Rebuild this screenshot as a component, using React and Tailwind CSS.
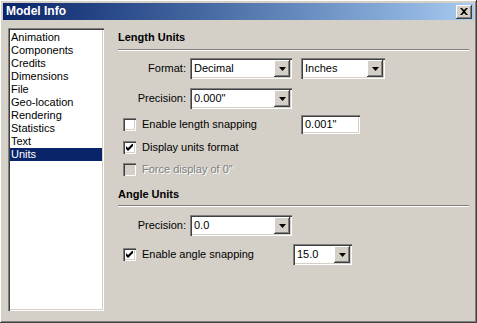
const raised =
  "shadow-[inset_-1px_-1px_#404040,inset_1px_1px_#ffffff,inset_-2px_-2px_#808080,inset_2px_2px_#d4d0c8]";
const sunken =
  "shadow-[inset_1px_1px_#808080,inset_2px_2px_#404040,inset_-1px_-1px_#ffffff,inset_-2px_-2px_#d4d0c8]";

const items = [
  "Animation",
  "Components",
  "Credits",
  "Dimensions",
  "File",
  "Geo-location",
  "Rendering",
  "Statistics",
  "Text",
  "Units",
];

function Arrow() {
  return (
    <svg width="7" height="4" viewBox="0 0 7 4">
      <path d="M0 0h7L3.5 4z" fill="#000" />
    </svg>
  );
}

function Combo({ value, width }) {
  return (
    <div className={`flex h-[21px] bg-white p-[2px] ${sunken} ${width}`}>
      <div className="flex-1 pl-[2px] leading-[17px] text-black">{value}</div>
      <div className={`flex h-[17px] w-[16px] items-center justify-center bg-[#d4d0c8] ${raised}`}>
        <Arrow />
      </div>
    </div>
  );
}

function Check({ checked, disabled }) {
  return (
    <div
      className={`flex h-[13px] w-[13px] shrink-0 items-center justify-center ${sunken} ${
        disabled ? "bg-[#d4d0c8]" : "bg-white"
      }`}
    >
      {checked && (
        <svg width="7" height="7" viewBox="0 0 7 7">
          <path d="M0 2v3l2 2 5-5V-1L2 4z" fill="#000" />
        </svg>
      )}
    </div>
  );
}

function Header({ title }) {
  return <div className="font-bold leading-[13px] text-black">{title}</div>;
}

function Rule({ className }) {
  return <div className={`h-[2px] border-t border-[#808080] border-b border-b-white ${className}`} />;
}

export default function App() {
  return (
    <div
      className={`flex h-[323px] w-[477px] flex-col bg-[#d4d0c8] p-[3px] font-['Liberation_Sans',Arial,sans-serif] text-[11px] leading-[13px] ${raised}`}
    >
      {/* title bar */}
      <div className="flex h-[18px] items-center justify-between bg-gradient-to-r from-[#0a246a] to-[#a6caf0] pl-[3px] pr-[2px]">
        <span className="text-[12px] font-bold text-white">Model Info</span>
        <div className={`flex h-[14px] w-[16px] items-center justify-center bg-[#d4d0c8] ${raised}`}>
          <svg width="8" height="7" viewBox="0 0 8 7">
            <path d="M0 0h2l2 2 2-2h2L5 3.5 8 7H6L4 5 2 7H0l3-3.5z" fill="#000" />
          </svg>
        </div>
      </div>

      <div className="flex flex-1 pl-[5px] pt-[8px] pb-[9px]">
        {/* list */}
        <div className={`h-[283px] w-[96px] bg-white p-[2px] pt-[3px] ${sunken}`}>
          {items.map((it) => (
            <div
              key={it}
              className={`h-[13px] pl-[1px] leading-[13px] ${
                it === "Units" ? "bg-[#0a246a] text-white" : "text-black"
              }`}
            >
              {it}
            </div>
          ))}
        </div>

        {/* settings */}
        <div className="ml-[14px] w-[351px] pt-[3px]">
          <Header title="Length Units" />
          <Rule className="mt-[5px]" />

          <div className="mt-[7px] flex items-center">
            <div className="w-[68px] text-right text-black">Format:</div>
            <Combo value="Decimal" width="ml-[4px] w-[102px]" />
            <Combo value="Inches" width="ml-[9px] w-[84px]" />
          </div>

          <div className="mt-[9px] flex items-center">
            <div className="w-[68px] text-right text-black">Precision:</div>
            <Combo value={'0.000"'} width="ml-[4px] w-[102px]" />
          </div>

          <div className="mt-[6px] flex h-[19px] items-center pl-[5px]">
            <div className="flex w-[178px] items-center gap-[6px]">
              <Check />
              <span className="text-black">Enable length snapping</span>
            </div>
            <div className={`h-[19px] w-[59px] bg-white pl-[4px] leading-[19px] text-black ${sunken}`}>
              0.001"
            </div>
          </div>

          <div className="mt-[7px] flex items-center gap-[6px] pl-[5px]">
            <Check checked />
            <span className="text-black">Display units format</span>
          </div>

          <div className="mt-[9px] flex items-center gap-[6px] pl-[5px]">
            <Check disabled />
            <span className="text-[#808080] [text-shadow:1px_1px_#ffffff]">Force display of 0"</span>
          </div>

          <div className="mt-[12px]">
            <Header title="Angle Units" />
          </div>
          <Rule className="mt-[4px]" />

          <div className="mt-[8px] flex items-center">
            <div className="w-[68px] text-right text-black">Precision:</div>
            <Combo value="0.0" width="ml-[4px] w-[102px]" />
          </div>

          <div className="mt-[8px] flex items-center pl-[5px]">
            <div className="flex w-[170px] items-center gap-[6px]">
              <Check checked />
              <span className="text-black">Enable angle snapping</span>
            </div>
            <Combo value="15.0" width="w-[59px]" />
          </div>
        </div>
      </div>
    </div>
  );
}
